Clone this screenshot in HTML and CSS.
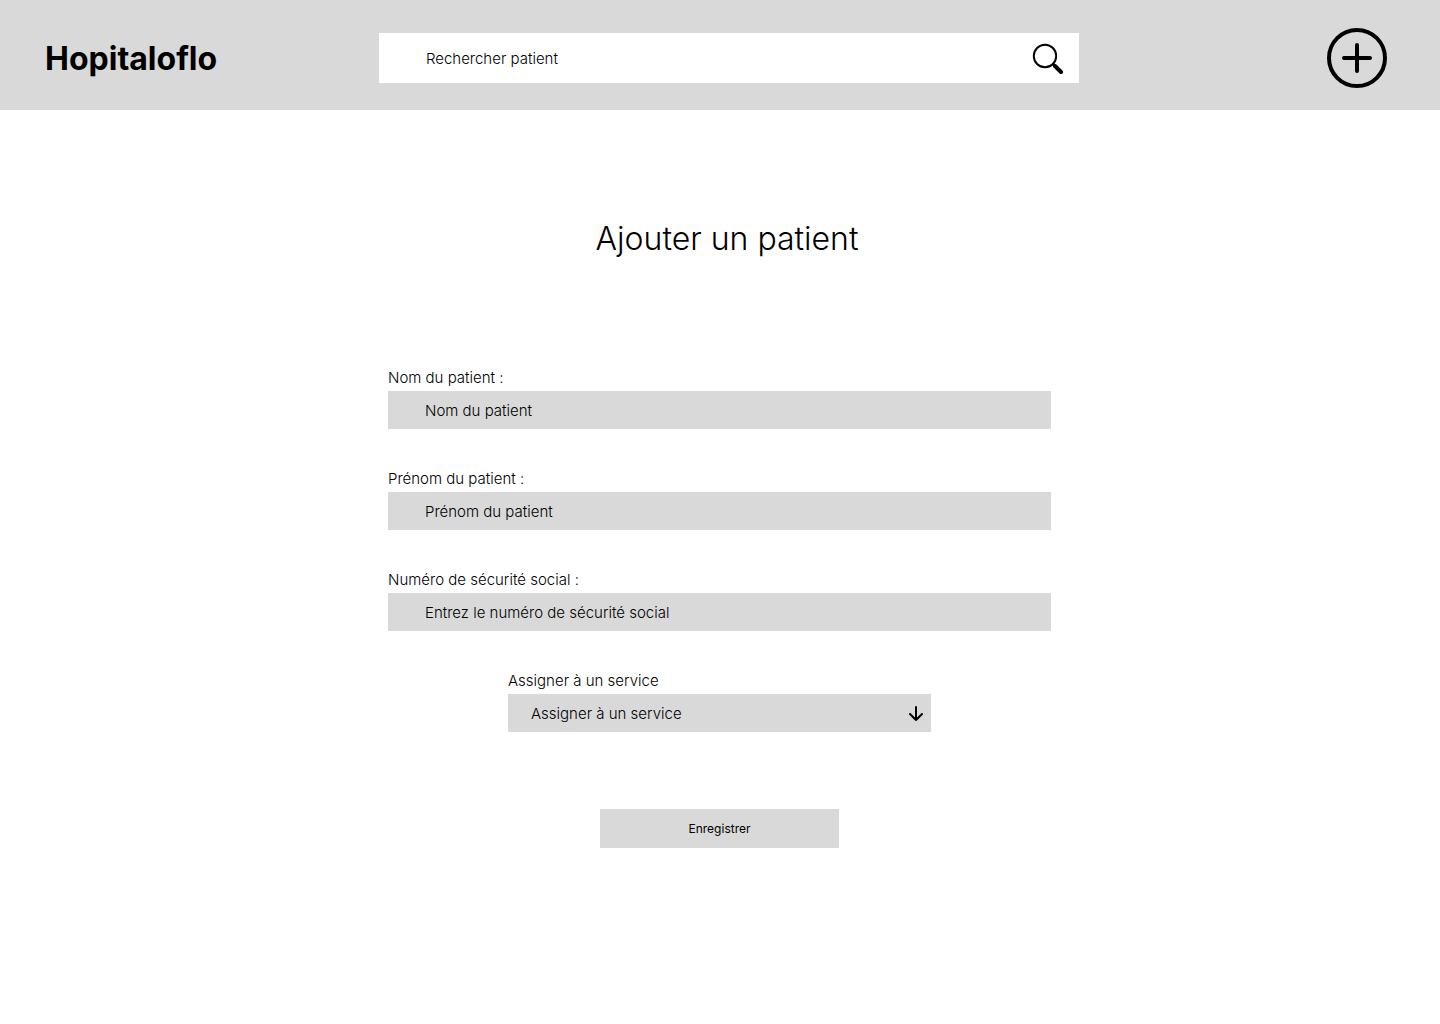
FILE: index.html
```html
<!DOCTYPE html>
<html lang="fr">
<head>
<meta charset="utf-8">
<meta name="viewport" content="width=device-width, initial-scale=1">
<title>Hopitaloflo</title>
<link rel="stylesheet" href="styles.css">
</head>
<body>
<header class="topbar">
  <a class="brand" href="#">Hopitaloflo</a>
  <form class="search" role="search">
    <input class="search-input" type="search" placeholder="Rechercher patient" aria-label="Rechercher patient">
    <button class="icon-button" type="submit" aria-label="Rechercher">
      <svg width="32" height="32" viewBox="0 0 32 32" fill="none" stroke="#000" aria-hidden="true">
        <circle cx="13" cy="14" r="11.2" stroke-width="2"/>
        <path d="M20.500 21.500l3 3" stroke-width="3"/>
        <path d="M23 24l6 6" stroke-width="4" stroke-linecap="round"/>
      </svg>
    </button>
  </form>
  <button class="icon-button add" type="button" aria-label="Ajouter un patient">
    <svg width="60" height="60" viewBox="0 0 60 60" fill="none" stroke="#000" stroke-width="4" stroke-linecap="round" aria-hidden="true">
      <circle cx="30" cy="30" r="28"/>
      <path d="M30 17v26M17 30h26"/>
    </svg>
  </button>
</header>
<main class="page">
  <h1 class="title">Ajouter un patient</h1>
  <form class="patient-form">
    <div class="field">
      <label class="label" for="nom">Nom du patient :</label>
      <input class="control" id="nom" type="text" placeholder="Nom du patient">
    </div>
    <div class="field">
      <label class="label" for="prenom">Prénom du patient :</label>
      <input class="control" id="prenom" type="text" placeholder="Prénom du patient">
    </div>
    <div class="field">
      <label class="label" for="secu">Numéro de sécurité social :</label>
      <input class="control" id="secu" type="text" placeholder="Entrez le numéro de sécurité social">
    </div>
    <div class="field field-service">
      <label class="label" for="service">Assigner à un service</label>
      <div class="select-wrap">
        <select class="control select" id="service"><option>Assigner à un service</option></select>
        <svg class="arrow" width="16" height="16" viewBox="0 0 16 16" fill="none" stroke="#000" stroke-width="2" stroke-linecap="round" stroke-linejoin="round" aria-hidden="true">
          <path d="M8 1v13M2 8l6 6 6-6"/>
        </svg>
      </div>
    </div>
    <button class="submit" type="submit">Enregistrer</button>
  </form>
</main>
</body>
</html>
```
FILE: styles.css
```css
* { box-sizing: border-box; }

body {
  margin: 0;
  background: #fff;
  color: #000;
  font-family: Inter, "Liberation Sans", sans-serif;
  font-size: 15px;
  font-weight: 300;
  font-optical-sizing: none;
}

input, select, button {
  margin: 0;
  border: 0;
  border-radius: 0;
  color: inherit;
  font: inherit;
  font-optical-sizing: none;
}

input::placeholder { color: #000; opacity: 1; }

.topbar {
  display: grid;
  grid-template-columns: 12fr minmax(0, 700px) 11fr;
  align-items: center;
  min-height: 110px;
  padding: 6px 53px 0 45px;
  gap: 24px;
  background: #d9d9d9;
}

.brand {
  padding-top: 2px;
  color: inherit;
  font-size: 32px;
  line-height: 40px;
  font-weight: 700;
  text-decoration: none;
}

.search {
  display: flex;
  align-items: center;
  height: 50px;
  padding-right: 15px;
  background: #fff;
}

.search-input {
  flex: 1;
  min-width: 0;
  height: 100%;
  padding: 0 16px 0 47px;
  background: transparent;
  appearance: none;
}

.icon-button {
  display: flex;
  padding: 0;
  background: transparent;
  cursor: pointer;
}

.add { justify-self: end; }

.page {
  display: flex;
  flex-direction: column;
  align-items: center;
  padding: 109px 25px 48px 24px;
}

.title {
  margin: 0;
  padding-left: 15px;
  font-size: 32px;
  line-height: 40px;
  font-weight: 300;
}

.patient-form {
  display: flex;
  flex-direction: column;
  align-items: center;
  width: 100%;
  max-width: 663px;
  margin-top: 109px;
  gap: 40px;
}

.field {
  display: flex;
  flex-direction: column;
  width: 100%;
  gap: 4px;
}

.field-service { max-width: 423px; }

.label { line-height: 19px; }

.control {
  width: 100%;
  height: 38px;
  padding: 0 37px;
  background: #d9d9d9;
}

.select-wrap { position: relative; }

.select {
  display: block;
  padding: 0 37px 0 23px;
  appearance: none;
}

.arrow {
  position: absolute;
  top: 12px;
  right: 7px;
  pointer-events: none;
}

.submit {
  width: 239px;
  max-width: 100%;
  height: 39px;
  margin-top: 37px;
  background: #d9d9d9;
  font-size: 12px;
  font-weight: 400;
  cursor: pointer;
}
```
